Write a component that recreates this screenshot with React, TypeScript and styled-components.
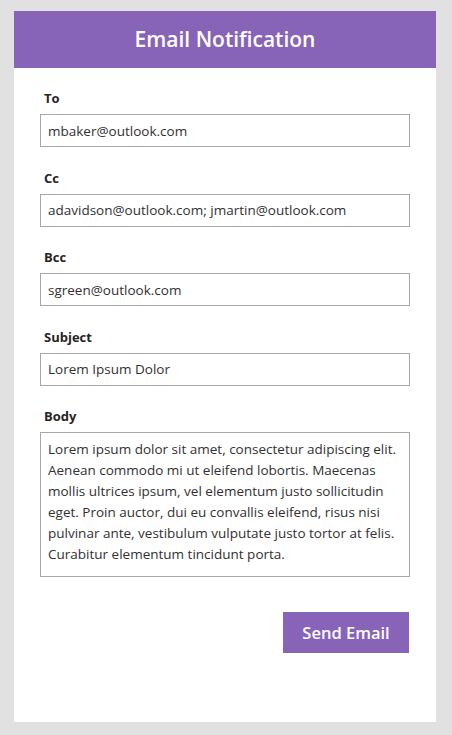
import * as React from 'react'
import styled, { createGlobalStyle } from 'styled-components'

const GlobalStyle = createGlobalStyle`
  html, body {
    margin: 0;
    padding: 0;
    background: #e1e1e1;
  }
  body {
    font-family: 'Open Sans', 'Noto Sans', sans-serif;
  }
`

const Page = styled.div`
  padding: 10.5px 16px 13px 14px;
`

const Card = styled.div`
  background: #fff;
  height: 711.5px;
  display: flex;
  flex-direction: column;
`

const Header = styled.div`
  height: 57.5px;
  background: #8764b8;
  display: flex;
  align-items: center;
  justify-content: center;
  h1 {
    margin: 0;
    color: #fff;
    font-size: 21px;
    font-weight: 600;
  }
`

const Form = styled.form`
  display: flex;
  flex-direction: column;
  padding: 21px 26px 0 26px;
`

const Field = styled.div`
  display: flex;
  flex-direction: column;
  margin-bottom: 21.5px;
`

const Label = styled.label`
  font-size: 13px;
  line-height: 18px;
  font-weight: 700;
  color: #252525;
  padding-left: 4px;
  margin-bottom: 7px;
`

const Input = styled.input`
  box-sizing: border-box;
  height: 33px;
  width: 100%;
  border: 1px solid #a8a8a8;
  padding: 0 7px;
  font-family: inherit;
  font-size: 13.5px;
  color: #323130;
  background: #fff;
  outline: none;
`

const TextArea = styled.textarea`
  box-sizing: border-box;
  height: 145px;
  width: 100%;
  border: 1px solid #a8a8a8;
  padding: 6px 7px;
  font-family: inherit;
  font-size: 13.5px;
  line-height: 21px;
  color: #323130;
  resize: none;
  overflow: hidden;
  outline: none;
`

const Actions = styled.div`
  display: flex;
  justify-content: flex-end;
  margin-top: 13.5px;
  padding-right: 1px;
`

const SendButton = styled.button`
  width: 126px;
  height: 41px;
  border: none;
  background: #8764b8;
  color: #fff;
  font-family: inherit;
  font-size: 16.5px;
  font-weight: 600;
  cursor: pointer;
`

const fields = [
  { label: 'To', value: 'mbaker@outlook.com' },
  { label: 'Cc', value: 'adavidson@outlook.com; jmartin@outlook.com' },
  { label: 'Bcc', value: 'sgreen@outlook.com' },
  { label: 'Subject', value: 'Lorem Ipsum Dolor' }
]

const body =
  'Lorem ipsum dolor sit amet, consectetur adipiscing elit. Aenean commodo mi ut eleifend lobortis. Maecenas mollis ultrices ipsum, vel elementum justo sollicitudin eget. Proin auctor, dui eu convallis eleifend, risus nisi pulvinar ante, vestibulum vulputate justo tortor at felis. Curabitur elementum tincidunt porta.'

export default function App() {
  return (
    <Page>
      <GlobalStyle />
      <Card>
        <Header>
          <h1>Email Notification</h1>
        </Header>
        <Form onSubmit={e => e.preventDefault()}>
          {fields.map(f => (
            <Field key={f.label}>
              <Label>{f.label}</Label>
              <Input defaultValue={f.value} />
            </Field>
          ))}
          <Field>
            <Label>Body</Label>
            <TextArea defaultValue={body} />
          </Field>
          <Actions>
            <SendButton type="submit">Send Email</SendButton>
          </Actions>
        </Form>
      </Card>
    </Page>
  )
}
